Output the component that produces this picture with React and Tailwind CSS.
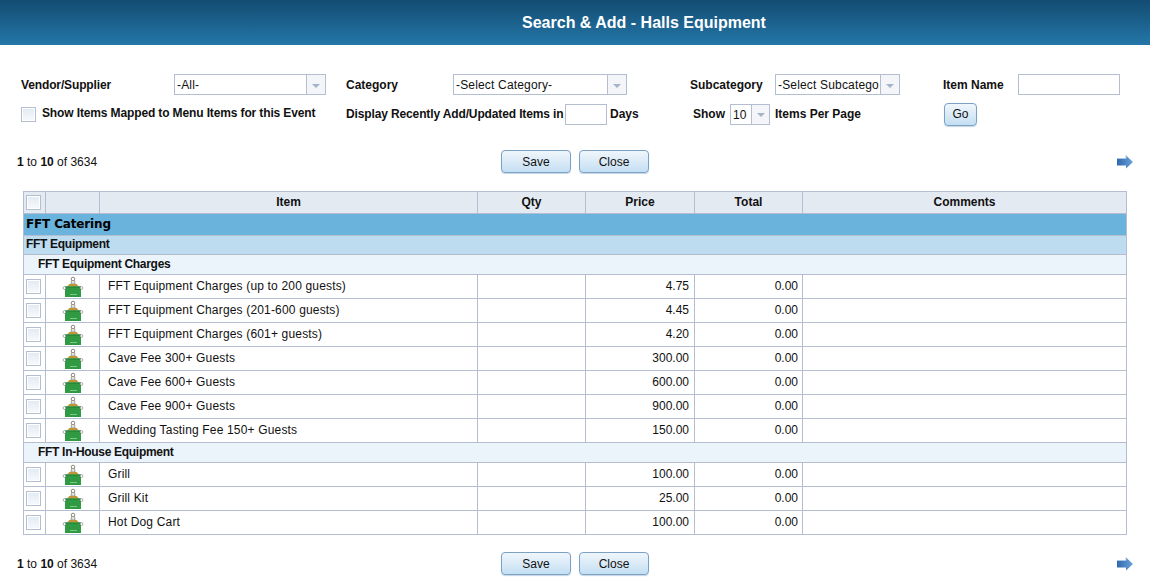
import React from 'react';

const Check = () => (
    <span className="block w-[15px] h-[15px] border border-[#b5bdd0] p-px bg-white">
        <span className="block w-full h-full bg-gradient-to-b from-[#e3ebf3] to-[#f6f9fc]"></span>
    </span>
);

const Select = ({ value, width, arrow = 'w-[19px]' }) => (
    <div className={`flex h-[21px] border border-[#b5bdd0] bg-white ${width}`}>
        <span className="flex-1 pl-[2px] leading-[20px] text-[12px] tracking-[0.17px] whitespace-nowrap">{value}</span>
        <span className={`flex items-center justify-center border-l border-[#b5bdd0] bg-[#f4f5f8] ${arrow}`}>
            <span className="w-0 h-0 border-x-[4px] border-x-transparent border-t-[4px] border-t-[#a3b3cc] mt-[2px]"></span>
        </span>
    </div>
);

const Btn = ({ children, width = 'w-[70px]' }) => (
    <button className={`h-[23px] rounded-[4px] border border-[#7ba2c4] bg-gradient-to-b from-[#f0f6fb] to-[#c4dff3] text-[12px] text-[#111] shadow-[0_1px_1px_#c5d5e3] ${width}`}>
        {children}
    </button>
);

const Arrow = () => (
    <svg width="16" height="14" viewBox="0 0 16 14">
        <defs>
            <linearGradient id="arr" x1="0" y1="0" x2="1" y2="0">
                <stop offset="0" stopColor="#2f68ad" />
                <stop offset="1" stopColor="#6ba3dc" />
            </linearGradient>
        </defs>
        <path d="M0 3.5H9V0.5L16 7L9 13.5V10.5H0Z" fill="url(#arr)" />
        <path d="M0 3.5H9V0.5" fill="none" stroke="#a9c8e8" strokeWidth="1" />
    </svg>
);

// little green chafing box with a hook on top
const ItemIcon = () => (
    <svg width="22" height="22" viewBox="0 0 22 22" className="block mx-auto">
        <circle cx="11" cy="3" r="1.8" fill="#fff" stroke="#8a8a80" strokeWidth="1" />
        <path d="M9.5 4.5H12.5L13 8H9Z" fill="#e4e4dc" stroke="#8a8a80" strokeWidth="0.8" />
        <path d="M5 10.5L7.5 8H14.5L17 10.5Z" fill="#b59a3c" />
        <path d="M7 8.5H9V10H7ZM13 8.5H15V10H13Z" fill="#d98a2a" />
        <path d="M3 10.5H19V21H3Z" fill="#2f9a42" />
        <path d="M3 10.5H19V11.5H3Z" fill="#1d7a30" />
        <rect x="8" y="18" width="7" height="1" fill="#7cc98a" />
        <circle cx="2.5" cy="12" r="1.4" fill="#fff" stroke="#777" strokeWidth="0.6" />
        <circle cx="19.5" cy="12" r="1.4" fill="#fff" stroke="#777" strokeWidth="0.6" />
    </svg>
);

const Pager = () => (
    <div className="flex items-center h-[23px]">
        <div className="w-[501px] pl-[17px] text-[12px] pt-px">
            <b>1</b> to <b>10</b> of 3634
        </div>
        <div className="flex gap-2">
            <Btn>Save</Btn>
            <Btn>Close</Btn>
        </div>
        <div className="ml-auto pr-[17px]">
            <Arrow />
        </div>
    </div>
);

const cell = 'border border-[#b5bdd0] p-0';

const ItemRow = ({ name, price }) => (
    <tr className="h-[24px]">
        <td className={`${cell} pl-[2px]`}><Check /></td>
        <td className={cell}><ItemIcon /></td>
        <td className={`${cell} pl-2 pb-[2px] tracking-[0.17px]`}>{name}</td>
        <td className={cell}></td>
        <td className={`${cell} text-right pr-[5px] pb-[2px]`}>{price}</td>
        <td className={`${cell} text-right pr-[4px] pb-[2px]`}>0.00</td>
        <td className={cell}></td>
    </tr>
);

const charges = [
    ['FFT Equipment Charges (up to 200 guests)', '4.75'],
    ['FFT Equipment Charges (201-600 guests)', '4.45'],
    ['FFT Equipment Charges (601+ guests)', '4.20'],
    ['Cave Fee 300+ Guests', '300.00'],
    ['Cave Fee 600+ Guests', '600.00'],
    ['Cave Fee 900+ Guests', '900.00'],
    ['Wedding Tasting Fee 150+ Guests', '150.00'],
];

const inHouse = [
    ['Grill', '100.00'],
    ['Grill Kit', '25.00'],
    ['Hot Dog Cart', '100.00'],
];

const head = `${cell} text-center pb-[2px]`;

export default function App() {
    return (
        <div className="w-[1150px] h-[580px] overflow-hidden bg-white text-[12px] text-[#111] font-['Liberation_Sans',Arial,sans-serif]">
            <div className="h-[45px] flex items-center justify-center pl-[138px] bg-gradient-to-b from-[#134c72] to-[#2477a8] text-white text-[16px] font-bold">
                Search &amp; Add - Halls Equipment
            </div>

            <div className="mt-[29px] pl-[21px] flex items-center h-[21px] font-bold whitespace-nowrap">
                <span className="w-[153px] tracking-[-0.13px]">Vendor/Supplier</span>
                <div className="font-normal"><Select value="-All-" width="w-[152px]" /></div>
                <span className="ml-[20px] w-[107px]">Category</span>
                <div className="font-normal"><Select value="-Select Category-" width="w-[174px]" /></div>
                <span className="ml-[63px] w-[85px]">Subcategory</span>
                <div className="font-normal"><Select value="-Select Subcatego" width="w-[125px]" /></div>
                <span className="ml-[43px] w-[75px]">Item Name</span>
                <div className="w-[102px] h-[21px] border border-[#b5bdd0]"></div>
            </div>

            <div className="mt-[8px] pl-[21px] flex items-center h-[22px] font-bold whitespace-nowrap">
                <Check />
                <span className="ml-[6px] w-[304px] mb-[2px] tracking-[-0.13px]">Show Items Mapped to Menu Items for this Event</span>
                <span className="w-[219px] tracking-[-0.13px]">Display Recently Add/Updated Items in</span>
                <div className="w-[42px] h-[21px] border border-[#b5bdd0]"></div>
                <span className="ml-[3px] w-[83px]">Days</span>
                <span className="w-[37px]">Show</span>
                <div className="font-normal"><Select value="10" width="w-[40px]" arrow="w-[18px]" /></div>
                <span className="ml-[5px] w-[169px]">Items Per Page</span>
                <Btn width="w-[33px] font-normal">Go</Btn>
            </div>

            <div className="mt-[25px]"><Pager /></div>

            <div className="mt-[18px] pl-[23px]">
                <table className="w-[1103px] table-fixed border-collapse text-[12px] leading-[14px]">
                    <colgroup>
                        <col className="w-[22px]" />
                        <col className="w-[54px]" />
                        <col className="w-[378px]" />
                        <col className="w-[108px]" />
                        <col className="w-[109px]" />
                        <col className="w-[108px]" />
                        <col className="w-[324px]" />
                    </colgroup>
                    <thead>
                        <tr className="h-[22px] bg-[#e3eaf2] font-bold">
                            <td className={`${cell} pl-[2px]`}><Check /></td>
                            <td className={cell}></td>
                            <td className={head}>Item</td>
                            <td className={head}>Qty</td>
                            <td className={head}>Price</td>
                            <td className={head}>Total</td>
                            <td className={head}>Comments</td>
                        </tr>
                    </thead>
                    <tbody>
                        <tr className="h-[22px] bg-[#69b3dc]">
                            <td colSpan={7} className={`${cell} pl-[2px] pb-[2px] font-bold text-[12px] tracking-[-0.15px] text-black font-['DejaVu_Sans',sans-serif]`}>FFT Catering</td>
                        </tr>
                        <tr className="h-[19px] bg-[#bddcf0]">
                            <td colSpan={7} className={`${cell} pl-[2px] pb-[2px] font-bold tracking-[-0.3px]`}>FFT Equipment</td>
                        </tr>
                        <tr className="h-[20px] bg-[#ebf4fb]">
                            <td colSpan={7} className={`${cell} pl-[14px] pb-[2px] font-bold tracking-[-0.3px]`}>FFT Equipment Charges</td>
                        </tr>
                        {charges.map(([name, price]) => <ItemRow key={name} name={name} price={price} />)}
                        <tr className="h-[20px] bg-[#ebf4fb]">
                            <td colSpan={7} className={`${cell} pl-[14px] pb-[2px] font-bold tracking-[-0.3px]`}>FFT In-House Equipment</td>
                        </tr>
                        {inHouse.map(([name, price]) => <ItemRow key={name} name={name} price={price} />)}
                    </tbody>
                </table>
            </div>

            <div className="mt-[17px]"><Pager /></div>
        </div>
    );
}
